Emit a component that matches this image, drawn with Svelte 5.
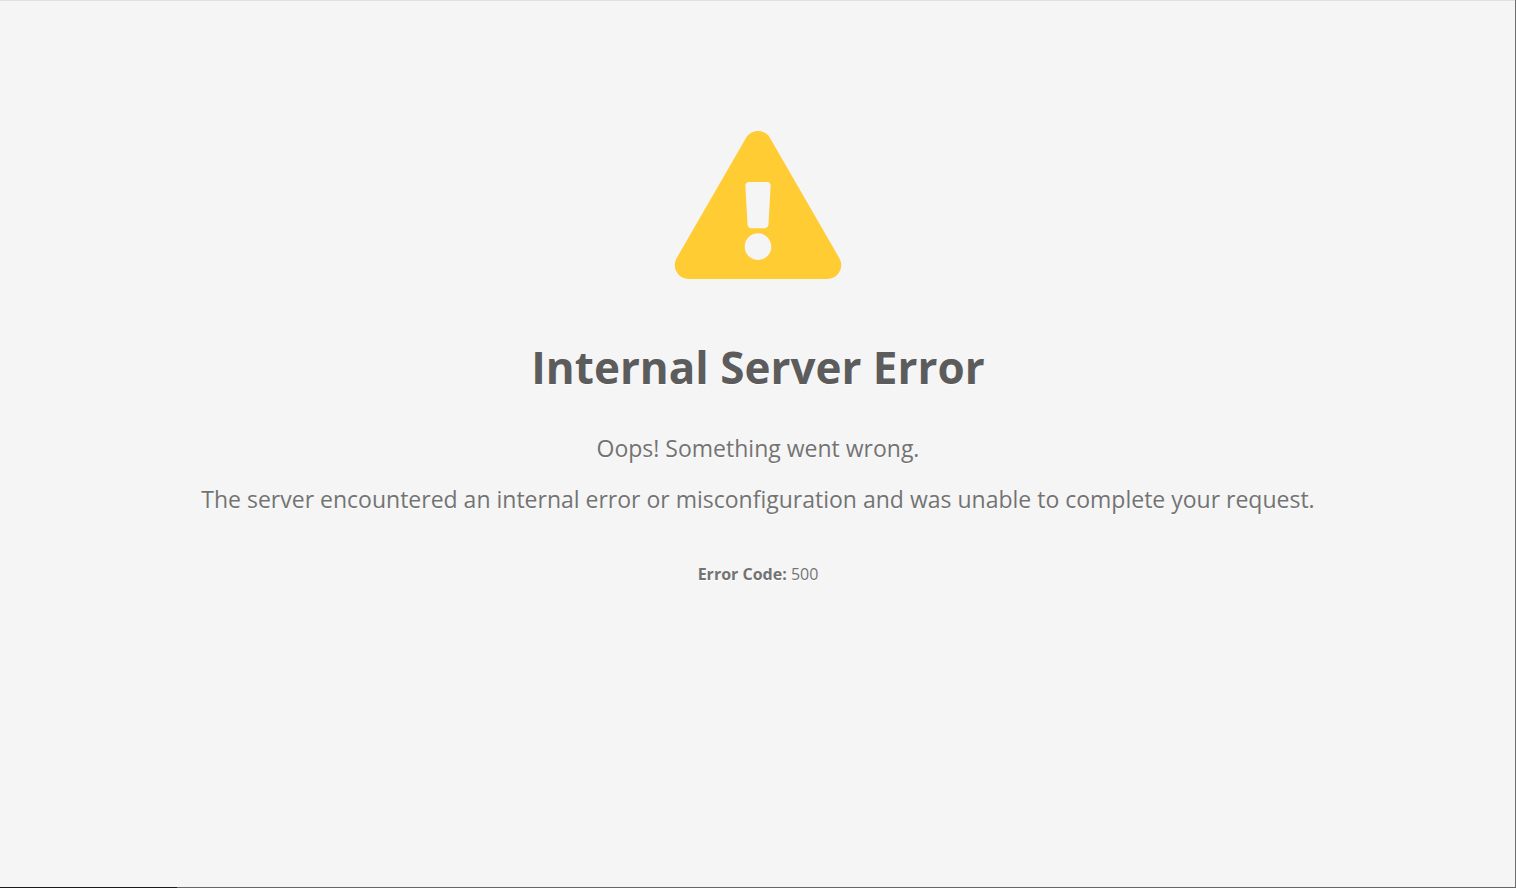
<script lang="ts">
  const errorCode = 500;
</script>

<svelte:head>
  <title>Internal Server Error</title>
</svelte:head>

<main class="page">
  <svg class="icon" viewBox="0 0 576 512" aria-hidden="true">
    <path
      fill="currentColor"
      d="M569.517 440.013C587.975 472.007 564.806 512 527.94 512H48.054c-36.937 0-59.999-40.055-41.577-71.987L246.423 23.985c18.467-32.009 64.72-31.951 83.154 0l239.94 416.028zM288 354c-25.405 0-46 20.595-46 46s20.595 46 46 46 46-20.595 46-46-20.595-46-46-46zm-43.673-165.346l7.418 136c.347 6.364 5.609 11.346 11.982 11.346h48.546c6.373 0 11.635-4.982 11.982-11.346l7.418-136c.375-6.874-5.098-12.654-11.982-12.654h-63.383c-6.884 0-12.356 5.78-11.981 12.654z"
    />
  </svg>
  <h1>Internal Server Error</h1>
  <p>Oops! Something went wrong.</p>
  <p>The server encountered an internal error or misconfiguration and was unable to complete your request.</p>
  <p class="code"><strong>Error Code:</strong> {errorCode}</p>
</main>

<style>
  :global(body) {
    background: #f5f5f5;
  }

  .page {
    box-sizing: border-box;
    min-height: 100vh;
    display: flex;
    flex-direction: column;
    align-items: center;
    padding: 131px 20px 40px;
    /* thin window edges: light top, grey right and bottom, darker bottom left */
    background:
      linear-gradient(#1a1a1a, #1a1a1a) left bottom / 177px 1px no-repeat,
      linear-gradient(#666, #666) left bottom / 100% 1px no-repeat,
      linear-gradient(#6e6e6e, #6e6e6e) right top / 1px 100% no-repeat,
      linear-gradient(#e0e0e0, #e0e0e0) left top / 100% 1px no-repeat;
    font-family: 'Segoe UI', 'Open Sans', 'Noto Sans', sans-serif;
    color: #737373;
    text-align: center;
    text-shadow: 0 1px 0 #fff;
  }

  .icon {
    width: 168px;
    height: 148px;
    color: #fc3;
  }

  h1 {
    margin: 56px 0 32px;
    font-size: 44px;
    line-height: 64px;
    color: #5c5c5c;
  }

  p {
    margin: 0 0 16px;
    font-size: 23px;
    line-height: 35px;
  }

  .code {
    margin: 29px 0 0;
    font-size: 16px;
    line-height: 24px;
  }
</style>
